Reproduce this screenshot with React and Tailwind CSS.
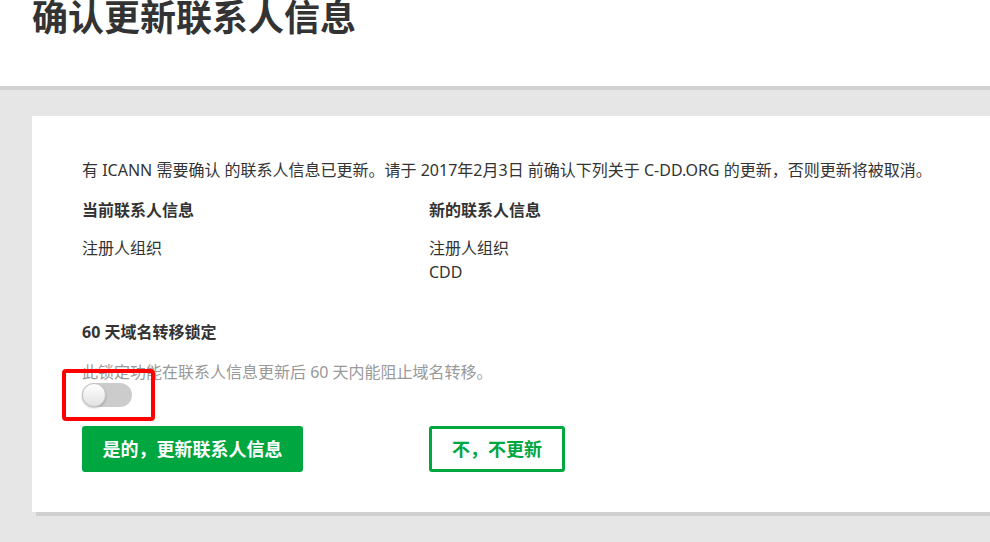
import React from 'react';

const font = { fontFamily: '"Noto Sans", "Noto Sans CJK SC", "Liberation Sans", sans-serif' };

const Toggle = () => (
    <div className="relative w-[50px] h-6 rounded-full bg-[#cccccc]">
        <div className="absolute left-0 top-0 w-6 h-6 rounded-full bg-gradient-to-b from-white to-[#e2e2e2] border border-[#c4c4c4] shadow-[0_1px_2px_rgba(0,0,0,0.25)]" />
    </div>
);

export default function App() {
    return (
        <div className="min-h-[542px] bg-[#e6e6e6] text-[#333333]" style={font}>
            {/* Header */}
            <div className="h-[90px] bg-white border-b-4 border-[#d2d2d2] px-8">
                <h1 className="text-[36px] leading-[36px] font-bold text-[#333333]">确认更新联系人信息</h1>
            </div>

            {/* Card */}
            <div className="pl-8 pt-[26px] pb-[26px]">
                <div className="relative bg-white shadow-[4px_4px_0_#d0d0d0] pl-[50px] pr-4 pt-[42px] pb-10 text-base leading-6">
                    <p className="whitespace-nowrap">
                        有 ICANN 需要确认 的联系人信息已更新。请于 2017年2月3日 前确认下列关于 C-DD.ORG 的更新，否则更新将被取消。
                    </p>

                    <div className="flex mt-4">
                        <div className="w-[347px]">
                            <h3 className="font-bold">当前联系人信息</h3>
                            <p className="mt-[14px]">注册人组织</p>
                        </div>
                        <div>
                            <h3 className="font-bold">新的联系人信息</h3>
                            <p className="mt-[14px]">注册人组织</p>
                            <p>CDD</p>
                        </div>
                    </div>

                    <h3 className="font-bold mt-9">60 天域名转移锁定</h3>
                    <p className="mt-[17px] leading-[22px] text-[#999999]">此锁定功能在联系人信息更新后 60 天内能阻止域名转移。</p>
                    <Toggle />

                    {/* Annotation */}
                    <div className="absolute left-[30px] top-[253px] w-[93px] h-[52px] border-4 border-[#ff0000] rounded-[4px]" />

                    <div className="flex mt-[19px]">
                        <div className="w-[347px]">
                            <button className="w-[221px] h-[46px] rounded-[3px] bg-[#00a63f] text-white text-lg font-bold">
                                是的，更新联系人信息
                            </button>
                        </div>
                        <button className="w-[136px] h-[46px] rounded-[3px] border-[3px] border-[#00a63f] bg-white text-[#00a63f] text-lg font-bold">
                            不，不更新
                        </button>
                    </div>
                </div>
            </div>
        </div>
    );
}
